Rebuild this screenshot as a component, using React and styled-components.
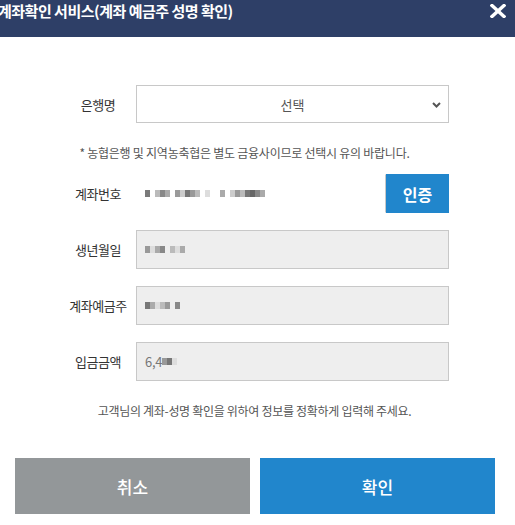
import React from "react";
import styled, { createGlobalStyle } from "styled-components";

const GlobalStyle = createGlobalStyle`
  html, body {
    margin: 0;
    padding: 0;
    background: #ffffff;
    font-family: "Noto Sans CJK KR", "Noto Sans", sans-serif;
  }
`;

const masks = {
  account: ["#7a7a7a", "#fff", "#bbb", "#888", "#aaa", "#fff", "#9a9a9a", "#ccc", "#777", "#999", "#bbb", "#fff", "#ddd", "#fff", "#fff", "#aaa", "#fff", "#ccc", "#999", "#bbb", "#777", "#666", "#888", "#aaa"],
  birth: ["#999", "#ddd", "#aaa", "#888", "#eee", "#bbb", "#ddd", "#aaa"],
  owner: ["#777", "#aaa", "#ddd", "#bbb", "#999", "#eee", "#888"],
  amount: ["#999", "#777", "#ddd"],
};

const App = () => {
  return (
    <>
      <GlobalStyle />
      <Modal>
        <Header>
          <Title>계좌확인 서비스(계좌 예금주 성명 확인)</Title>
          <Close aria-label="닫기">
            <svg width="16" height="14" viewBox="0 0 16 14">
              <path d="M2 1.5 L14 12.5 M14 1.5 L2 12.5" stroke="#fff" strokeWidth="3.4" strokeLinecap="square" />
            </svg>
          </Close>
        </Header>

        <Form>
          <Row $height={38}>
            <Label>은행명</Label>
            <Select>
              <span>선택</span>
              <Chevron width="9" height="6" viewBox="0 0 9 6">
                <path d="M1 1 L4.5 4.5 L8 1" stroke="#555" strokeWidth="2" fill="none" />
              </Chevron>
            </Select>
          </Row>

          <Note>* 농협은행 및 지역농축협은 별도 금융사이므로 선택시 유의 바랍니다.</Note>

          <Fields>
            <Row>
              <Label>계좌번호</Label>
              <InputGroup>
                <Input $white>
                  <Mask>{masks.account.map((c, i) => <Pixel key={i} style={{ background: c }} />)}</Mask>
                </Input>
                <AuthButton>인증</AuthButton>
              </InputGroup>
            </Row>
            <Row>
              <Label>생년월일</Label>
              <Input>
                <Mask>{masks.birth.map((c, i) => <Pixel key={i} style={{ background: c }} />)}</Mask>
              </Input>
            </Row>
            <Row>
              <Label>계좌예금주</Label>
              <Input>
                <Mask>{masks.owner.map((c, i) => <Pixel key={i} style={{ background: c }} />)}</Mask>
              </Input>
            </Row>
            <Row>
              <Label>입금금액</Label>
              <Input>
                <Amount>6,4</Amount>
                <Mask>{masks.amount.map((c, i) => <Pixel key={i} style={{ background: c }} />)}</Mask>
              </Input>
            </Row>
          </Fields>

          <Guide>고객님의 계좌-성명 확인을 위하여 정보를 정확하게 입력해 주세요.</Guide>
        </Form>

        <Buttons>
          <ActionButton $variant="cancel">취소</ActionButton>
          <ActionButton $variant="confirm">확인</ActionButton>
        </Buttons>
      </Modal>
    </>
  );
};

const Modal = styled.div`
  width: 515px;
  height: 525px;
  background: #fff;
  display: flex;
  flex-direction: column;
  overflow: hidden;
`;

const Header = styled.div`
  height: 37px;
  background: #2e3f67;
  display: flex;
  align-items: flex-start;
  justify-content: space-between;
  padding-right: 9px;
  box-sizing: border-box;
`;

const Title = styled.h1`
  margin: 0 0 0 -2px;
  font-size: 15px;
  line-height: 22px;
  font-weight: 700;
  color: #fff;
  letter-spacing: -0.5px;
  white-space: nowrap;
`;

const Close = styled.button`
  border: 0;
  background: none;
  padding: 0;
  margin-top: 4px;
  width: 16px;
  height: 14px;
  display: flex;
`;

const Form = styled.div`
  padding: 48px 66px 0 60px;
  display: flex;
  flex-direction: column;
`;

const Row = styled.div`
  display: grid;
  grid-template-columns: 76px 1fr;
  align-items: center;
  height: ${({ $height }) => $height || 39}px;
`;

const Label = styled.label`
  font-size: 13px;
  color: #333;
  text-align: center;
  letter-spacing: -0.5px;
`;

const Select = styled.div`
  height: 100%;
  border: 1px solid #c8c8c8;
  box-sizing: border-box;
  position: relative;
  display: flex;
  align-items: center;
  justify-content: center;
  font-size: 13px;
  color: #555;
`;

const Chevron = styled.svg`
  position: absolute;
  right: 7px;
  top: 16px;
`;

const Note = styled.p`
  margin: 20px 0 11px;
  font-size: 12px;
  line-height: 20px;
  color: #555;
  text-align: center;
  letter-spacing: -0.25px;
  padding-right: 20px;
  white-space: nowrap;
`;

const Fields = styled.div`
  display: flex;
  flex-direction: column;
  gap: 17px;
`;

const InputGroup = styled.div`
  display: flex;
  height: 100%;
`;

const Input = styled.div`
  flex: 1;
  height: 100%;
  box-sizing: border-box;
  border: 1px solid ${({ $white }) => ($white ? "#fff" : "#c8c8c8")};
  border-right-color: #c8c8c8;
  background: ${({ $white }) => ($white ? "#fff" : "#eeeeee")};
  display: flex;
  align-items: center;
  padding-left: 8px;
  font-size: 13px;
  color: #777;
`;

const Amount = styled.span`
  letter-spacing: -0.3px;
`;

const Mask = styled.span`
  display: inline-flex;
  align-items: center;
  height: 7px;
`;

const Pixel = styled.i`
  display: block;
  width: 5px;
  height: 7px;
`;

const AuthButton = styled.button`
  width: 63px;
  height: 100%;
  border: 0;
  background: #2186cc;
  color: #fff;
  font-family: inherit;
  font-size: 16px;
  font-weight: 700;
  padding: 0;
`;

const Guide = styled.p`
  margin: 20px 0 0;
  font-size: 12px;
  line-height: 20px;
  color: #555;
  text-align: center;
  letter-spacing: -0.3px;
  white-space: nowrap;
`;

const Buttons = styled.div`
  margin-top: 37px;
  padding: 0 20px 0 15px;
  display: grid;
  grid-template-columns: 1fr 1fr;
  gap: 10px;
`;

const ActionButton = styled.button`
  height: 56px;
  border: 0;
  background: ${({ $variant }) => ($variant === "cancel" ? "#939799" : "#2186cc")};
  color: #fff;
  font-family: inherit;
  font-size: 17px;
  font-weight: 500;
`;

export default App;
